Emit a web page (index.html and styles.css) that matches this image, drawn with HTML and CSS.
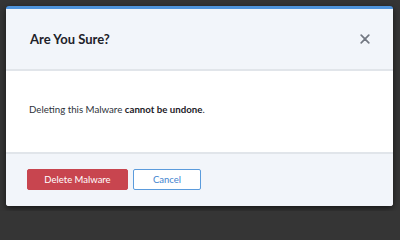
FILE: index.html
```html
<!DOCTYPE html>
<html>
<head>
<meta charset="utf-8">
<link rel="stylesheet" href="styles.css">
</head>
<body>
<div class="backdrop">
  <div class="modal">
    <div class="modal-header">
      <h2 class="modal-title">Are You Sure?</h2>
      <button class="close" aria-label="Close">
        <svg width="10" height="10" viewBox="0 0 10 10"><path d="M1.2 1.2L8.8 8.8M8.8 1.2L1.2 8.8" stroke="#737882" stroke-width="1.7" stroke-linecap="round"/></svg>
      </button>
    </div>
    <div class="modal-body">
      <p>Deleting this Malware <strong>cannot be undone</strong>.</p>
    </div>
    <div class="modal-footer">
      <button class="btn btn-danger">Delete Malware</button>
      <button class="btn btn-outline">Cancel</button>
    </div>
  </div>
</div>
</body>
</html>
```
FILE: styles.css
```css
html, body {
  margin: 0;
  padding: 0;
}
body {
  background: #353535;
  font-family: Lato, "Open Sans", "Liberation Sans", sans-serif;
  width: 400px;
  height: 211px;
  overflow: hidden;
}
.backdrop {
  padding: 6px 7px 5px 6px;
}
.modal {
  width: 387px;
  height: 200px;
  background: #fff;
  border-radius: 3px;
  border-top: 3px solid #4f94dc;
  box-sizing: border-box;
  box-shadow: 0 2px 6px rgba(0,0,0,0.6);
  display: flex;
  flex-direction: column;
  overflow: hidden;
}
.modal-header {
  height: 60px;
  background: #f2f5fa;
  border-bottom: 2px solid #e1e5ea;
  display: flex;
  align-items: center;
  justify-content: space-between;
  padding: 0 22px 0 24px;
  flex-shrink: 0;
}
.modal-title {
  margin: 0;
  font-size: 13px;
  font-weight: 700;
  color: #1d2129;
}
.close {
  background: none;
  border: 0;
  padding: 0;
  width: 12px;
  height: 12px;
  display: flex;
  align-items: center;
  justify-content: center;
}
.modal-body {
  height: 81px;
  display: flex;
  align-items: center;
  padding: 0 23px;
  flex-shrink: 0;
}
.modal-body p {
  margin: 0 0 5px 0;
  font-size: 9.7px;
  color: #2e323a;
}
.modal-body strong {
  font-weight: 700;
  color: #1d2129;
}
.modal-footer {
  flex: 1;
  background: #f2f5fa;
  border-top: 2px solid #e1e5ea;
  display: flex;
  align-items: center;
  gap: 5px;
  padding: 0 21px 2px;
}
.btn {
  height: 21px;
  border-radius: 2px;
  font-family: Lato, "Open Sans", "Liberation Sans", sans-serif;
  font-size: 9.5px;
  padding: 0;
  box-sizing: border-box;
}
.btn-danger {
  width: 101px;
  background: #c8454f;
  border: 1px solid #c8454f;
  color: #fff;
}
.btn-outline {
  width: 68px;
  background: #fff;
  border: 1.5px solid #5b9bdc;
  color: #3f84cf;
}
```
